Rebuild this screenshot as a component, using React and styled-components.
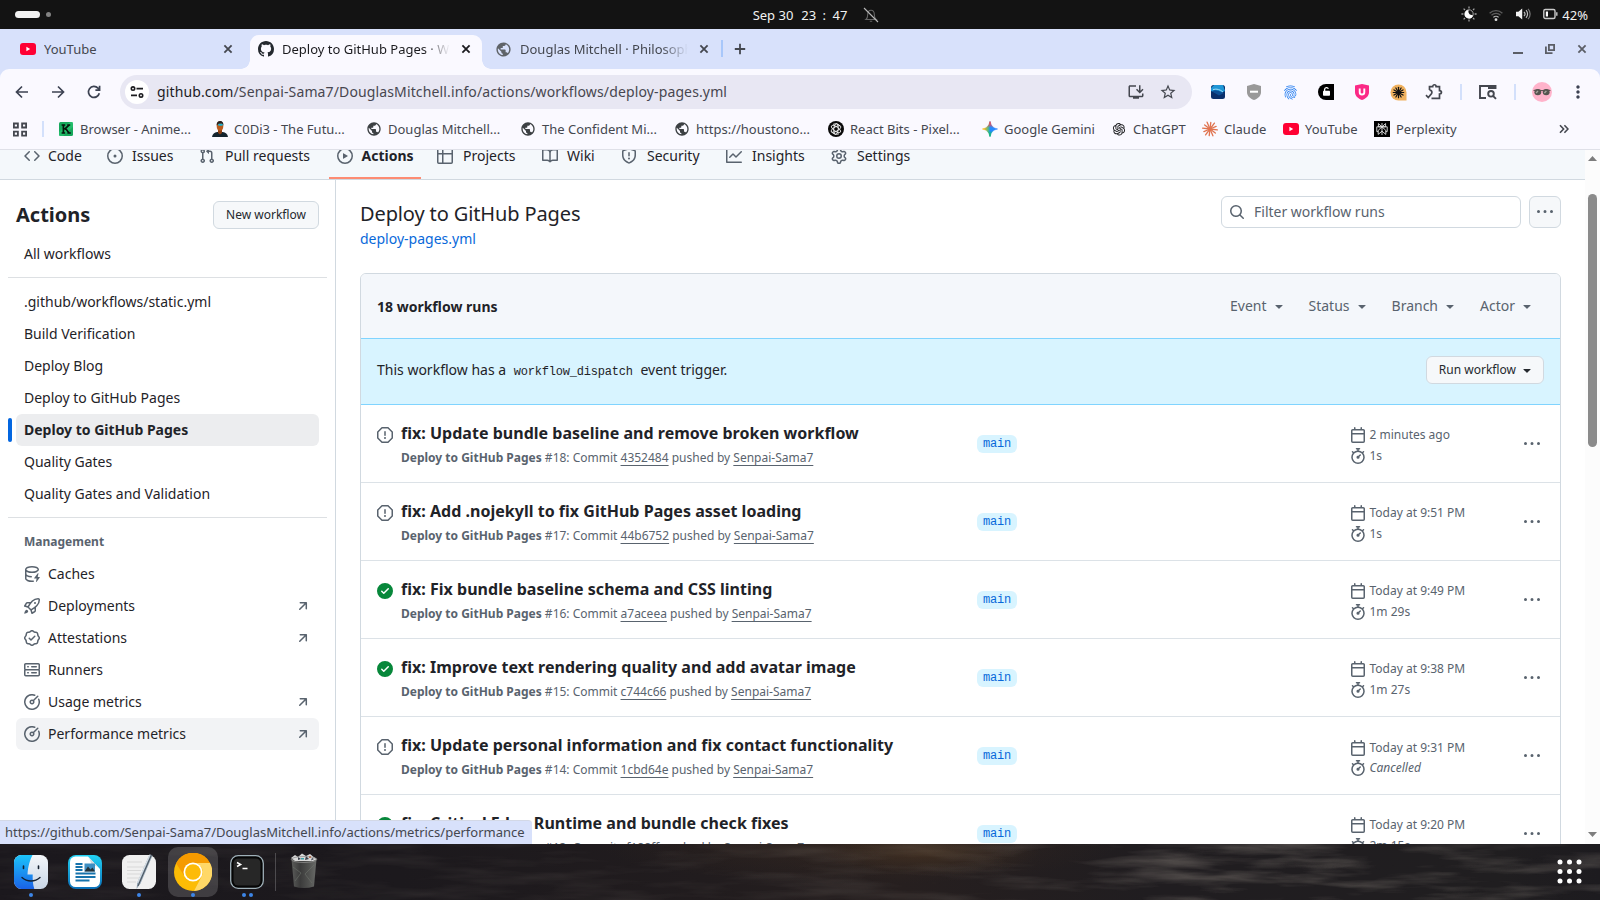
import React from "react";
import styled, { createGlobalStyle, css } from "styled-components";
import { MdPublic, MdFingerprint, MdStarBorder, MdInstallDesktop, MdMoreVert } from "react-icons/md";
import { AiOutlineOpenAI } from "react-icons/ai";

const GlobalStyle = createGlobalStyle`
  * { box-sizing: border-box; }
  body {
    margin: 0;
    overflow: hidden;
    font-family: "Noto Sans", sans-serif;
    font-size: 14px;
    color: #1f2328;
    background: #fff;
  }
  svg { display: block; flex: none; }
`;

/* ---------- icons ---------- */

const octicons = {
  code: "m11.28 3.22 4.25 4.25a.75.75 0 0 1 0 1.06l-4.25 4.25a.749.749 0 0 1-1.275-.326.749.749 0 0 1 .215-.734L13.94 8l-3.72-3.72a.749.749 0 0 1 .326-1.275.749.749 0 0 1 .734.215Zm-6.56 0a.751.751 0 0 1 1.042.018.751.751 0 0 1 .018 1.042L2.06 8l3.72 3.72a.749.749 0 0 1-.326 1.275.749.749 0 0 1-.734-.215L.47 8.53a.75.75 0 0 1 0-1.06Z",
  issue: "M8 9.5a1.5 1.5 0 1 0 0-3 1.5 1.5 0 0 0 0 3ZM8 0a8 8 0 1 1 0 16A8 8 0 0 1 8 0ZM1.5 8a6.5 6.5 0 1 0 13 0 6.5 6.5 0 0 0-13 0Z",
  pull: "M1.5 3.25a2.25 2.25 0 1 1 3 2.122v5.256a2.251 2.251 0 1 1-1.5 0V5.372A2.25 2.25 0 0 1 1.5 3.25Zm5.677-.177L9.573.677A.25.25 0 0 1 10 .854V2.5h1A2.5 2.5 0 0 1 13.5 5v5.628a2.251 2.251 0 1 1-1.5 0V5a1 1 0 0 0-1-1h-1v1.646a.25.25 0 0 1-.427.177L7.177 3.427a.25.25 0 0 1 0-.354ZM3.75 2.5a.75.75 0 1 0 0 1.5.75.75 0 0 0 0-1.5Zm0 9.5a.75.75 0 1 0 0 1.5.75.75 0 0 0 0-1.5Zm8.25.75a.75.75 0 1 0 1.5 0 .75.75 0 0 0-1.5 0Z",
  play: "M8 0a8 8 0 1 1 0 16A8 8 0 0 1 8 0ZM1.5 8a6.5 6.5 0 1 0 13 0 6.5 6.5 0 0 0-13 0Zm4.879-2.773 4.264 2.559a.25.25 0 0 1 0 .428l-4.264 2.559A.25.25 0 0 1 6 10.559V5.442a.25.25 0 0 1 .379-.215Z",
  table: "M0 1.75C0 .784.784 0 1.75 0h12.5C15.216 0 16 .784 16 1.75v12.5A1.75 1.75 0 0 1 14.25 16H1.75A1.75 1.75 0 0 1 0 14.25ZM6.5 6.5v8h7.75a.25.25 0 0 0 .25-.25V6.5Zm8-1.5V1.75a.25.25 0 0 0-.25-.25H6.5V5Zm-13 1.5v7.75c0 .138.112.25.25.25H5v-8ZM5 5V1.5H1.75a.25.25 0 0 0-.25.25V5Z",
  book: "M0 1.75A.75.75 0 0 1 .75 1h4.253c1.227 0 2.317.59 3 1.501A3.743 3.743 0 0 1 11.006 1h4.245a.75.75 0 0 1 .75.75v10.5a.75.75 0 0 1-.75.75h-4.507a2.25 2.25 0 0 0-1.591.659l-.622.621a.75.75 0 0 1-1.06 0l-.622-.621A2.25 2.25 0 0 0 5.258 13H.75a.75.75 0 0 1-.75-.75Zm7.251 10.324.004-5.073-.002-2.253A2.25 2.25 0 0 0 5.003 2.5H1.5v9h3.757a3.75 3.75 0 0 1 1.994.574ZM8.755 4.75l-.004 7.322a3.752 3.752 0 0 1 1.992-.572H14.5v-9h-3.495a2.25 2.25 0 0 0-2.25 2.25Z",
  shield: "M7.467.133a1.748 1.748 0 0 1 1.066 0l5.25 1.68A1.75 1.75 0 0 1 15 3.48V7c0 1.566-.32 3.182-1.303 4.682-.983 1.498-2.585 2.813-5.032 3.855a1.697 1.697 0 0 1-1.33 0c-2.447-1.042-4.049-2.357-5.032-3.855C1.32 10.182 1 8.566 1 7V3.48a1.755 1.755 0 0 1 1.217-1.667Zm.61 1.429a.25.25 0 0 0-.153 0l-5.25 1.68a.25.25 0 0 0-.174.238V7c0 1.358.275 2.666 1.057 3.86.784 1.194 2.121 2.34 4.366 3.297a.196.196 0 0 0 .154 0c2.245-.956 3.582-2.104 4.366-3.298C13.225 9.666 13.5 8.36 13.5 7V3.48a.251.251 0 0 0-.174-.237l-5.25-1.68ZM8.75 4.75v3a.75.75 0 0 1-1.5 0v-3a.75.75 0 0 1 1.5 0ZM9 10.5a1 1 0 1 1-2 0 1 1 0 0 1 2 0Z",
  graph: "M1.5 1.75V13.5h13.75a.75.75 0 0 1 0 1.5H.75a.75.75 0 0 1-.75-.75V1.75a.75.75 0 0 1 1.5 0Zm14.28 2.53-5.25 5.25a.75.75 0 0 1-1.06 0L7 7.06 4.28 9.78a.751.751 0 0 1-1.042-.018.751.751 0 0 1-.018-1.042l3.25-3.25a.75.75 0 0 1 1.06 0L10 7.94l4.72-4.72a.751.751 0 0 1 1.042.018.751.751 0 0 1 .018 1.042Z",
  gear: "M8 0a8.2 8.2 0 0 1 .701.031C9.444.095 9.99.645 10.16 1.29l.288 1.107c.018.066.079.158.212.224.231.114.454.243.668.386.123.082.233.09.299.071l1.103-.303c.644-.176 1.392.021 1.82.63.27.385.506.792.704 1.218.315.675.111 1.422-.364 1.891l-.814.806c-.049.048-.098.147-.088.294.016.257.016.515 0 .772-.01.147.038.246.088.294l.814.806c.475.469.679 1.216.364 1.891a7.977 7.977 0 0 1-.704 1.217c-.428.61-1.176.807-1.82.63l-1.102-.302c-.067-.019-.177-.011-.3.071a5.909 5.909 0 0 1-.668.386c-.133.066-.194.158-.211.224l-.29 1.106c-.168.646-.715 1.196-1.458 1.26a8.006 8.006 0 0 1-1.402 0c-.743-.064-1.289-.614-1.458-1.26l-.289-1.106c-.018-.066-.079-.158-.212-.224a5.738 5.738 0 0 1-.668-.386c-.123-.082-.233-.09-.299-.071l-1.103.303c-.644.176-1.392-.021-1.82-.63a8.12 8.12 0 0 1-.704-1.218c-.315-.675-.111-1.422.363-1.891l.815-.806c.05-.048.098-.147.088-.294a6.214 6.214 0 0 1 0-.772c.01-.147-.038-.246-.088-.294l-.815-.806C.635 6.045.431 5.298.746 4.623a7.92 7.92 0 0 1 .704-1.217c.428-.61 1.176-.807 1.82-.63l1.102.302c.067.019.177.011.3-.071.214-.143.437-.272.668-.386.133-.066.194-.158.211-.224l.29-1.106C6.009.645 6.556.095 7.299.03 7.53.01 7.764 0 8 0Zm-.571 1.525c-.036.003-.108.036-.137.146l-.289 1.105c-.147.561-.549.967-.998 1.189-.173.086-.34.183-.5.29-.417.278-.97.423-1.529.27l-1.103-.303c-.109-.03-.175.016-.195.045-.22.312-.412.644-.573.99-.014.031-.021.11.059.19l.815.806c.411.406.562.957.53 1.456a4.709 4.709 0 0 0 0 .582c.032.499-.119 1.05-.53 1.456l-.815.806c-.081.08-.073.159-.059.19.162.346.353.677.573.989.02.03.085.076.195.046l1.102-.303c.56-.153 1.113-.008 1.53.27.161.107.328.204.501.29.447.222.85.629.997 1.189l.289 1.105c.029.109.101.143.137.146a6.6 6.6 0 0 0 1.142 0c.036-.003.108-.036.137-.146l.289-1.105c.147-.561.549-.967.998-1.189.173-.086.34-.183.5-.29.417-.278.97-.423 1.529-.27l1.103.303c.109.029.175-.016.195-.045.22-.313.411-.644.573-.99.014-.031.021-.11-.059-.19l-.815-.806c-.411-.406-.562-.957-.53-1.456a4.709 4.709 0 0 0 0-.582c-.032-.499.119-1.05.53-1.456l.815-.806c.081-.08.073-.159.059-.19a6.464 6.464 0 0 0-.573-.989c-.02-.03-.085-.076-.195-.046l-1.102.303c-.56.153-1.113.008-1.53-.27a4.44 4.44 0 0 0-.501-.29c-.447-.222-.85-.629-.997-1.189l-.289-1.105c-.029-.11-.101-.143-.137-.146a6.6 6.6 0 0 0-1.142 0ZM11 8a3 3 0 1 1-6 0 3 3 0 0 1 6 0ZM9.5 8a1.5 1.5 0 1 0-3.001.001A1.5 1.5 0 0 0 9.5 8Z",
  cache: "M2.5 5.724V8c0 .248.238.7 1.169 1.159.874.43 2.144.745 3.62.822a.75.75 0 1 1-.078 1.498c-1.622-.085-3.102-.432-4.204-.975a5.565 5.565 0 0 1-.507-.28V12.5c0 .133.058.318.282.551.227.237.591.483 1.101.707 1.015.447 2.47.742 4.117.742.406 0 .802-.018 1.183-.052a.751.751 0 1 1 .134 1.494C8.89 15.98 8.45 16 8 16c-1.805 0-3.475-.32-4.721-.869-.623-.274-1.173-.619-1.579-1.041-.408-.425-.7-.964-.7-1.59v-9c0-.626.292-1.165.7-1.591.406-.42.956-.766 1.579-1.04C4.525.32 6.195 0 8 0c1.806 0 3.476.32 4.721.869.623.274 1.173.619 1.579 1.041.408.425.7.964.7 1.59 0 .626-.292 1.165-.7 1.591-.406.42-.956.766-1.578 1.04C11.475 6.68 9.805 7 8 7c-1.805 0-3.475-.32-4.721-.869a6.15 6.15 0 0 1-.779-.407Zm0-2.224c0 .133.058.318.282.551.227.237.591.483 1.101.707C4.898 5.205 6.353 5.5 8 5.5c1.646 0 3.101-.295 4.118-.742.508-.224.873-.471 1.1-.708.224-.232.282-.417.282-.55 0-.133-.058-.318-.282-.551-.227-.237-.591-.483-1.101-.707C11.102 1.795 9.647 1.5 8 1.5c-1.646 0-3.101.295-4.118.742-.508.224-.873.471-1.1.708-.224.232-.282.417-.282.55ZM14.49 7.582a.375.375 0 0 0-.66-.313l-3.625 4.625a.375.375 0 0 0 .295.606h2.127l-.619 2.922a.375.375 0 0 0 .666.304l3.125-4.125A.375.375 0 0 0 15.5 11h-1.778l.769-3.418Z",
  rocket: "M14.064 0h.186C15.216 0 16 .784 16 1.75v.186a8.752 8.752 0 0 1-2.564 6.186l-.458.459c-.314.314-.641.616-.979.904v3.207c0 .608-.315 1.172-.833 1.49l-2.774 1.707a.749.749 0 0 1-1.11-.418l-.954-3.102a1.214 1.214 0 0 1-.145-.125L3.754 9.816a1.218 1.218 0 0 1-.124-.145L.528 8.717a.749.749 0 0 1-.418-1.11l1.71-2.774A1.748 1.748 0 0 1 3.31 4h3.204c.288-.338.59-.665.904-.979l.459-.458A8.749 8.749 0 0 1 14.064 0ZM8.938 3.623h-.002l-.458.458c-.76.76-1.437 1.598-2.02 2.5l-1.5 2.317 2.143 2.143 2.317-1.5c.902-.583 1.74-1.26 2.499-2.02l.459-.458a7.25 7.25 0 0 0 2.123-5.127V1.75a.25.25 0 0 0-.25-.25h-.186a7.249 7.249 0 0 0-5.125 2.123ZM3.56 14.56c-.732.732-2.334 1.045-3.005 1.148a.234.234 0 0 1-.201-.064.234.234 0 0 1-.064-.201c.103-.671.416-2.273 1.15-3.003a1.502 1.502 0 1 1 2.12 2.12Zm6.94-3.935c-.088.06-.177.118-.266.175l-2.35 1.521.548 1.783 1.949-1.2a.25.25 0 0 0 .119-.213ZM3.678 8.116 5.2 5.766c.058-.09.117-.178.176-.266H3.309a.25.25 0 0 0-.213.119l-1.2 1.95ZM12 5a1 1 0 1 1-2 0 1 1 0 0 1 2 0Z",
  verified: "m9.585.52.929.68c.153.112.331.186.518.215l1.138.175a2.678 2.678 0 0 1 2.24 2.24l.174 1.139c.029.187.103.365.215.518l.68.928a2.677 2.677 0 0 1 0 3.17l-.68.928a1.174 1.174 0 0 0-.215.518l-.175 1.138a2.678 2.678 0 0 1-2.241 2.241l-1.138.175a1.17 1.17 0 0 0-.518.215l-.928.68a2.677 2.677 0 0 1-3.17 0l-.928-.68a1.174 1.174 0 0 0-.518-.215L3.83 14.41a2.678 2.678 0 0 1-2.24-2.24l-.175-1.138a1.17 1.17 0 0 0-.215-.518l-.68-.928a2.677 2.677 0 0 1 0-3.17l.68-.928c.112-.153.186-.331.215-.518l.175-1.14a2.678 2.678 0 0 1 2.24-2.24l1.139-.175c.187-.029.365-.103.518-.215l.928-.68a2.677 2.677 0 0 1 3.17 0ZM7.303 1.728l-.927.68a2.67 2.67 0 0 1-1.18.489l-1.137.174a1.179 1.179 0 0 0-.987.987l-.174 1.136a2.677 2.677 0 0 1-.489 1.18l-.68.928a1.18 1.18 0 0 0 0 1.394l.68.927c.256.348.424.753.489 1.18l.174 1.137c.078.509.478.909.987.987l1.136.174a2.67 2.67 0 0 1 1.18.489l.928.68c.414.305.979.305 1.394 0l.927-.68a2.67 2.67 0 0 1 1.18-.489l1.137-.174a1.18 1.18 0 0 0 .987-.987l.174-1.136a2.67 2.67 0 0 1 .489-1.18l.68-.928a1.176 1.176 0 0 0 0-1.394l-.68-.927a2.686 2.686 0 0 1-.489-1.18l-.174-1.137a1.179 1.179 0 0 0-.987-.987l-1.136-.174a2.677 2.677 0 0 1-1.18-.489l-.928-.68a1.176 1.176 0 0 0-1.394 0ZM11.28 6.78l-3.75 3.75a.75.75 0 0 1-1.06 0L4.72 8.78a.751.751 0 0 1 .018-1.042.751.751 0 0 1 1.042-.018L7 8.94l3.22-3.22a.751.751 0 0 1 1.042.018.751.751 0 0 1 .018 1.042Z",
  server: "M1.75 1h12.5c.966 0 1.75.784 1.75 1.75v4c0 .372-.116.717-.314 1 .198.283.314.628.314 1v4a1.75 1.75 0 0 1-1.75 1.75H1.75A1.75 1.75 0 0 1 0 12.75v-4c0-.358.109-.707.314-1a1.739 1.739 0 0 1-.314-1v-4C0 1.784.784 1 1.75 1ZM1.5 2.75v4c0 .138.112.25.25.25h12.5a.25.25 0 0 0 .25-.25v-4a.25.25 0 0 0-.25-.25H1.75a.25.25 0 0 0-.25.25Zm.25 5.75a.25.25 0 0 0-.25.25v4c0 .138.112.25.25.25h12.5a.25.25 0 0 0 .25-.25v-4a.25.25 0 0 0-.25-.25ZM7 4.75A.75.75 0 0 1 7.75 4h4.5a.75.75 0 0 1 0 1.5h-4.5A.75.75 0 0 1 7 4.75ZM7.75 10h4.5a.75.75 0 0 1 0 1.5h-4.5a.75.75 0 0 1 0-1.5ZM3 4.75A.75.75 0 0 1 3.75 4h.5a.75.75 0 0 1 0 1.5h-.5A.75.75 0 0 1 3 4.75ZM3.75 10h.5a.75.75 0 0 1 0 1.5h-.5a.75.75 0 0 1 0-1.5Z",
  meter: "M8 1.5a6.5 6.5 0 1 0 6.016 4.035.75.75 0 0 1 1.388-.57 8 8 0 1 1-4.37-4.37.75.75 0 0 1-.569 1.389A6.473 6.473 0 0 0 8 1.5Zm6.28.22a.75.75 0 0 1 0 1.06l-4.063 4.064a2.5 2.5 0 1 1-1.06-1.06L13.22 1.72a.75.75 0 0 1 1.06 0ZM7 8a1 1 0 1 0 2 0 1 1 0 0 0-2 0Z",
  arrow: "M4.53 4.75A.75.75 0 0 1 5.28 4h6.01a.75.75 0 0 1 .75.75v6.01a.75.75 0 0 1-1.5 0v-4.2l-5.26 5.261a.749.749 0 0 1-1.275-.326.749.749 0 0 1 .215-.734L9.48 5.5h-4.2a.75.75 0 0 1-.75-.75Z",
  calendar: "M4.75 0a.75.75 0 0 1 .75.75V2h5V.75a.75.75 0 0 1 1.5 0V2h1.25c.966 0 1.75.784 1.75 1.75v10.5A1.75 1.75 0 0 1 13.25 16H2.75A1.75 1.75 0 0 1 1 14.25V3.75C1 2.784 1.784 2 2.75 2H4V.75A.75.75 0 0 1 4.75 0ZM2.5 7.5v6.75c0 .138.112.25.25.25h10.5a.25.25 0 0 0 .25-.25V7.5Zm10.75-4H2.75a.25.25 0 0 0-.25.25V6h11V3.75a.25.25 0 0 0-.25-.25Z",
  stopwatch: "M5.75.75A.75.75 0 0 1 6.5 0h3a.75.75 0 0 1 0 1.5h-.75v1l-.001.041a6.724 6.724 0 0 1 3.464 1.435l.007-.006.75-.75a.749.749 0 0 1 1.275.326.749.749 0 0 1-.215.734l-.75.75-.006.007a6.75 6.75 0 1 1-10.548 0L2.72 5.03l-.75-.75a.751.751 0 0 1 .018-1.042.751.751 0 0 1 1.042-.018l.75.75.007.006A6.72 6.72 0 0 1 7.25 2.541V1.5H6.5a.75.75 0 0 1-.75-.75ZM8 14.5a5.25 5.25 0 1 0-.001-10.501A5.25 5.25 0 0 0 8 14.5Zm.389-6.7 1.33-1.33a.75.75 0 1 1 1.061 1.06L9.45 8.861A1.503 1.503 0 0 1 8 10.75a1.499 1.499 0 1 1 .389-2.95Z",
  kebab: "M8 9a1.5 1.5 0 1 0 0-3 1.5 1.5 0 0 0 0 3ZM1.5 9a1.5 1.5 0 1 0 0-3 1.5 1.5 0 0 0 0 3Zm13 0a1.5 1.5 0 1 0 0-3 1.5 1.5 0 0 0 0 3Z",
  search: "M10.68 11.74a6 6 0 0 1-7.922-8.982 6 6 0 0 1 8.982 7.922l3.04 3.04a.749.749 0 0 1-.326 1.275.749.749 0 0 1-.734-.215ZM11.5 7a4.499 4.499 0 1 0-8.997 0A4.499 4.499 0 0 0 11.5 7Z",
  stop: "M4.47.22A.749.749 0 0 1 5 0h6c.199 0 .389.079.53.22l4.25 4.25c.141.14.22.331.22.53v6a.749.749 0 0 1-.22.53l-4.25 4.25A.749.749 0 0 1 11 16H5a.749.749 0 0 1-.53-.22L.22 11.53A.749.749 0 0 1 0 11V5c0-.199.079-.389.22-.53Zm.84 1.28L1.5 5.31v5.38l3.81 3.81h5.38l3.81-3.81V5.31L10.69 1.5ZM8 4a.75.75 0 0 1 .75.75v3.5a.75.75 0 0 1-1.5 0v-3.5A.75.75 0 0 1 8 4Zm0 8a1 1 0 1 1 0-2 1 1 0 0 1 0 2Z",
  check: "M8 16A8 8 0 1 1 8 0a8 8 0 0 1 0 16Zm3.78-9.72a.751.751 0 0 0-.018-1.042.751.751 0 0 0-1.042-.018L6.75 9.19 5.28 7.72a.751.751 0 0 0-1.042.018.751.751 0 0 0-.018 1.042l2 2a.75.75 0 0 0 1.06 0Z",
  github: "M8 0c4.42 0 8 3.58 8 8a8.013 8.013 0 0 1-5.45 7.59c-.4.08-.55-.17-.55-.38 0-.27.01-1.13.01-2.2 0-.75-.25-1.23-.54-1.48 1.78-.2 3.65-.88 3.65-3.95 0-.88-.31-1.59-.82-2.15.08-.2.36-1.02-.08-2.12 0 0-.67-.22-2.2.82-.64-.18-1.32-.27-2-.27-.68 0-1.36.09-2 .27-1.53-1.03-2.2-.82-2.2-.82-.44 1.1-.16 1.92-.08 2.12-.51.56-.82 1.28-.82 2.15 0 3.06 1.86 3.75 3.64 3.95-.23.2-.44.55-.51 1.07-.46.21-1.61.55-2.33-.66-.15-.24-.6-.83-1.23-.82-.67.01-.27.38.01.53.34.19.73.9.82 1.13.16.45.68 1.31 2.69.94 0 .67.01 1.3.01 1.49 0 .21-.15.45-.55.38A7.995 7.995 0 0 1 0 8c0-4.42 3.58-8 8-8Z",
  caret: "m4.427 7.427 3.396 3.396a.25.25 0 0 0 .354 0l3.396-3.396A.25.25 0 0 0 11.396 7H4.604a.25.25 0 0 0-.177.427Z",
};

const Octicon = ({ name, size = 16, color = "#59636e" }) => (
  <svg width={size} height={size} viewBox="0 0 16 16" fill={color}>
    <path fillRule={name === "cache" ? "nonzero" : "evenodd"} d={octicons[name]} />
  </svg>
);

const Line = ({ w = 16, h = 16, color = "#44474f", sw = 1.8, box, children }) => (
  <svg width={w} height={h} viewBox={box || `0 0 ${w} ${h}`} fill="none" stroke={color} strokeWidth={sw}>
    {children}
  </svg>
);

const YouTubeIcon = () => (
  <svg width="16" height="16" viewBox="0 0 16 16">
    <rect x="0" y="2" width="16" height="12" rx="3" fill="#ff0033" />
    <path d="M6.4 5.8v4.4L10.2 8z" fill="#fff" />
  </svg>
);

const CloseIcon = ({ color = "#44474f" }) => (
  <Line w={10} h={10} color={color} sw={1.8}>
    <path d="M1.4 1.4l7.2 7.2M8.6 1.4L1.4 8.6" />
  </Line>
);

const Burst = ({ size = 16, color, count = 12, sw = 1.3, r = 7.4 }) => (
  <svg width={size} height={size} viewBox="-8 -8 16 16" stroke={color} strokeWidth={sw} strokeLinecap="round">
    {Array.from({ length: count }, (_, i) => {
      const a = (i * 2 * Math.PI) / count + 0.12;
      const len = i % 2 ? r * 0.9 : r;
      return <line key={i} x1="0" y1="0" x2={Math.cos(a) * len} y2={Math.sin(a) * len} />;
    })}
  </svg>
);

const KIcon = () => (
  <svg width="16" height="16" viewBox="0 0 16 16">
    <rect x="1" y="1" width="14" height="14" rx="1.5" fill="#17a85c" />
    <path d="M1 11L12 1h3v5L5 15H1z" fill="#2fd07a" opacity=".5" />
    <path d="M3.6 4h3.6M3.6 12h3.6M9.2 4h3M9.4 12h3.4M5.4 4v8M11 4.2L6.4 8.4M7.6 7.4L11 12" stroke="#06140c" strokeWidth="1.7" fill="none" />
  </svg>
);

const PortraitIcon = () => (
  <svg width="16" height="16" viewBox="0 0 16 16">
    <path d="M0 16c.3-3 2.6-4.4 5.2-5h5.6c2.6.6 4.9 2 5.2 5z" fill="#13232e" />
    <path d="M6 8h4v4l-2 1.4L6 12z" fill="#8c3f12" />
    <ellipse cx="8" cy="5" rx="3.3" ry="4.8" fill="#b9591b" />
    <path d="M4.6 4.5C4.5 1.4 6 0 8.2 0s3.4 1.6 3.2 4.4L9.6 2.6 6.4 2.8z" fill="#23201f" />
    <rect x="6.2" y="2.8" width="4.6" height="2" rx=".8" fill="#18b5d8" />
  </svg>
);

const KnotIcon = () => (
  <svg width="16" height="16" viewBox="-8 -8 16 16" fill="none" stroke="#fff" strokeWidth=".85">
    <circle r="8" fill="#0a0a0a" stroke="none" />
    <ellipse rx="5.4" ry="2.2" transform="rotate(35)" />
    <ellipse rx="5.4" ry="2.2" transform="rotate(95)" />
    <ellipse rx="5.4" ry="2.2" transform="rotate(150)" />
    <path d="M-3-4.6C0-6 3-5 4-3M3 4.8C0 6-3.4 5-4.6 2.6" />
  </svg>
);

const GEMINI_STAR = "M8 .5C8.8 4.9 11.1 7.2 15.5 8 11.1 8.8 8.8 11.1 8 15.5 7.2 11.1 4.9 8.8.5 8 4.9 7.2 7.2 4.9 8 .5z";

const GeminiIcon = () => (
  <svg width="16" height="16" viewBox="0 0 16 16">
    <defs>
      <linearGradient id="gem" x1="0" y1=".5" x2="1" y2=".5">
        <stop offset=".1" stopColor="#fabc12" />
        <stop offset=".42" stopColor="#3fb6a0" />
        <stop offset=".5" stopColor="#1f8bff" />
        <stop offset="1" stopColor="#2f86ff" />
      </linearGradient>
      <linearGradient id="gemv" x1=".5" y1="0" x2=".5" y2="1">
        <stop offset=".1" stopColor="#ff4641" />
        <stop offset=".42" stopColor="#ff4641" stopOpacity="0" />
        <stop offset=".62" stopColor="#0ebc5f" stopOpacity="0" />
        <stop offset=".9" stopColor="#0ebc5f" />
      </linearGradient>
    </defs>
    <path d={GEMINI_STAR} fill="url(#gem)" stroke="url(#gem)" strokeWidth=".7" />
    <path d={GEMINI_STAR} fill="url(#gemv)" stroke="url(#gemv)" strokeWidth=".7" />
  </svg>
);

const PerplexityIcon = () => (
  <svg width="16" height="16" viewBox="0 0 16 16" fill="none" stroke="#e6e6e6" strokeWidth=".9">
    <rect width="16" height="16" fill="#000" stroke="none" />
    <path d="M8 2v12M4.4 2.6v3.2h7.2V2.6L8 5.8zM8 5.8L4.2 9.4v4L8 10.2l3.8 3.2v-4zM4.2 10.6H2.8V5.8h10.4v4.8h-1.4" />
  </svg>
);

/* ---------- system top bar ---------- */

const Desktop = styled.div`
  width: 1600px;
  height: 900px;
  display: flex;
  flex-direction: column;
  overflow: hidden;
`;

const TopBar = styled.header`
  height: 29px;
  background: #131313;
  color: #f2f2f2;
  font-size: 13px;
  display: grid;
  grid-template-columns: 1fr auto 1fr;
  align-items: center;
`;

const Workspaces = styled.div`
  display: flex;
  align-items: center;
  gap: 6px;
  padding-left: 15px;
`;

const WorkspacePill = styled.span`
  width: ${(p) => (p.$active ? 25 : 5)}px;
  height: ${(p) => (p.$active ? 7 : 5)}px;
  border-radius: 4px;
  background: ${(p) => (p.$active ? "#f2f2f2" : "#828282")};
`;

const Clock = styled.div`
  display: flex;
  align-items: center;
  gap: 8px;
  padding-left: 32px;
  white-space: pre;
  svg { margin-left: 8px; }
`;

const Time = styled.span`
  word-spacing: 3px;
`;

const Tray = styled.div`
  display: flex;
  align-items: center;
  justify-content: flex-end;
  gap: 12px;
  padding-right: 12px;
`;

const TrayIcon = styled.span`
  padding-bottom: 1px;
`;

const Battery = styled.span`
  display: flex;
  align-items: center;
  gap: 4px;
`;

const SystemBar = () => (
  <TopBar>
    <Workspaces>
      <WorkspacePill $active />
      <WorkspacePill />
    </Workspaces>
    <Clock>
      <span>Sep 30</span>
      <Time>23 : 47</Time>
      <Line color="#8c8c8c" sw={1.1}>
        <path d="M3 12.5c1.4-1 1.7-2.6 1.7-5C4.7 5 6 3.2 8 3.2s3.3 1.8 3.3 4.3c0 2.4.3 4 1.7 5zM6.8 14.3h2.4" stroke="#666" />
        <path d="M1 1l14 14" stroke="#b8b8b8" />
      </Line>
    </Clock>
    <Tray>
      <TrayIcon>
        <Line color="#a0a0a0" sw={1.3}>
          <path d="M8 .4v2M8 13.6v2M.4 8h2M13.6 8h2M2.6 2.6L4 4M12 12l1.4 1.4M2.6 13.4L4 12M12 4l1.4-1.4" />
          <circle cx="8" cy="8" r="4.2" stroke="#a8a8a8" strokeWidth="1" />
          <path d="M7.6 4a4.200 4.200 0 1 0 4.400 5.200C9 9.400 6.800 7.400 7.600 4z" fill="#fff" stroke="none" />
        </Line>
      </TrayIcon>
      <Line w={14} h={14} sw={1.3} color="#5d5d5d">
        <path d="M.6 5.2a9 9 0 0 1 12.8 0M2.5 7.3a6.3 6.3 0 0 1 9 0" />
        <path d="M4.4 9.4a3.7 3.7 0 0 1 5.2 0" stroke="#b0b0b0" />
        <circle cx="7" cy="11.7" r="1.4" fill="#ddd" stroke="none" />
      </Line>
      <TrayIcon>
        <Line sw={1.2} color="#bdbdbd">
          <path d="M1 5.8h2.4L7.2 2.6v10.8L3.4 10.2H1z" fill="#f2f2f2" stroke="none" />
          <path d="M9 5.8a3.2 3.2 0 0 1 0 4.4M11 4.2a5.4 5.4 0 0 1 0 7.6" />
          <path d="M13 2.8a7.4 7.4 0 0 1 0 10.4" stroke="#777" />
        </Line>
      </TrayIcon>
      <Battery>
        <TrayIcon>
          <Line w={15} box="0 0 15 16" sw={1.4} color="#c9c9c9">
            <rect x=".8" y="3.5" width="11.2" height="9" rx="1.5" />
            <path d="M13.8 6.2v3.6" />
            <rect x="2.8" y="5.5" width="2.2" height="5" fill="#fff" stroke="none" />
          </Line>
        </TrayIcon>
        <span>42%</span>
      </Battery>
    </Tray>
  </TopBar>
);

/* ---------- browser tab strip ---------- */

const TabStrip = styled.div`
  height: 40px;
  background: #d8e1fb;
  display: flex;
  align-items: flex-end;
  font-size: 13px;
  color: #44474f;
`;

const Tab = styled.div`
  position: relative;
  width: ${(p) => p.$width}px;
  height: 34px;
  padding: 0 11px 6px ${(p) => p.$pad}px;
  display: flex;
  align-items: center;
  gap: 8px;
  ${(p) =>
    p.$active &&
    css`
      background: #faf9ff;
      border-radius: 9px 9px 0 0;
      color: #1b1b1f;
      &::before,
      &::after {
        content: "";
        position: absolute;
        bottom: 0;
        width: 9px;
        height: 9px;
      }
      &::before {
        left: -9px;
        background: radial-gradient(circle at 0 0, transparent 8.5px, #faf9ff 9px);
      }
      &::after {
        right: -9px;
        background: radial-gradient(circle at 100% 0, transparent 8.5px, #faf9ff 9px);
      }
    `}
`;

const TabTitle = styled.span`
  flex: 0 0 168px;
  overflow: hidden;
  white-space: nowrap;
  mask-image: ${(p) => (p.$fade ? "linear-gradient(90deg, #000 84%, transparent 100%)" : "none")};
`;

const TabClose = styled.span`
  margin-left: auto;
`;

const TabGap = styled.span`
  width: 6px;
`;

const TabDivider = styled.span`
  width: 2px;
  height: 17px;
  margin: 0 11px 12px 1px;
  background: #a8c7fa;
`;

const NewTab = styled.span`
  margin-bottom: 14px;
`;

const WindowControls = styled.div`
  margin-left: auto;
  height: 40px;
  display: flex;
  align-items: center;
  gap: 22px;
  padding-right: 13px;
`;

const Tabs = () => (
  <TabStrip>
    <Tab $width={244} $pad={20}>
      <YouTubeIcon />
      <TabTitle>YouTube</TabTitle>
      <TabClose><CloseIcon /></TabClose>
    </Tab>
    <TabGap />
    <Tab $active $width={232} $pad={8}>
      <Octicon name="github" color="#24292f" />
      <TabTitle $fade>Deploy to GitHub Pages · Workflow runs</TabTitle>
      <TabClose><CloseIcon color="#1b1b1f" /></TabClose>
    </Tab>
    <Tab $width={238} $pad={13}>
      <MdPublic size={17} color="#5f6368" />
      <TabTitle $fade>Douglas Mitchell · Philosopher</TabTitle>
      <TabClose><CloseIcon /></TabClose>
    </Tab>
    <TabDivider />
    <NewTab>
      <Line w={12} h={12}><path d="M6 .8v10.4M.8 6h10.4" /></Line>
    </NewTab>
    <WindowControls>
      <Line w={10} h={10} color="#5b5e66" sw={2}><path d="M0 9h10" /></Line>
      <Line w={10} h={10} color="#5b5e66" sw={1.8}>
        <path d="M3.9.9h5.2v5.2H3.9zM.9 2.5v6.6h6.6" />
      </Line>
      <CloseIcon color="#5b5e66" />
    </WindowControls>
  </TabStrip>
);

/* ---------- browser toolbar ---------- */

const ToolbarBack = styled.div`
  background: #d8e1fb;
`;

const BrowserBars = styled.div`
  height: 81px;
  background: #faf9ff;
  border-bottom: 1px solid #dfe0e8;
  border-radius: 9px 9px 0 0;
  padding-top: 6px;
`;

const Toolbar = styled.div`
  height: 34px;
  display: flex;
  align-items: center;
  padding-left: 4px;
`;

const Slot = styled.span`
  width: ${(p) => p.$width || 36}px;
  display: flex;
  justify-content: center;
  flex: none;
`;

const Separator = styled.span`
  width: 2px;
  height: 16px;
  background: #d3e0fb;
`;

const Omnibox = styled.div`
  width: 1072px;
  height: 34px;
  margin: 0 8px;
  border-radius: 17px;
  background: #e8e7f3;
  display: flex;
  align-items: center;
  padding: 0 15px 0 5px;
`;

const SiteInfo = styled.span`
  width: 24px;
  height: 24px;
  border-radius: 12px;
  background: #fff;
  display: flex;
  align-items: center;
  justify-content: center;
  margin-right: 8px;
`;

const Url = styled.span`
  padding-bottom: 2px;
  font-size: 14px;
  letter-spacing: 0.13px;
  color: #47464f;
`;

const UrlHost = styled.span`
  color: #1b1b1f;
`;

const OmniActions = styled.span`
  margin-left: auto;
  display: flex;
  gap: 14px;
`;

const BookmarksBar = styled.nav`
  height: 40px;
  display: flex;
  align-items: center;
  padding-left: 12px;
  font-size: 13px;
  color: #44474f;
`;

const BookmarkDivider = styled(Separator)`
  margin: 0 14px 0 15px;
`;

const Bookmark = styled.span`
  width: ${(p) => p.$width}px;
  display: flex;
  align-items: center;
  gap: 6px;
  white-space: nowrap;
`;

const Overflow = styled.span`
  margin-left: auto;
  padding-right: 31px;
`;

const bookmarks = [
  { icon: <KIcon />, label: "Browser - Anime...", width: 154 },
  { icon: <PortraitIcon />, label: "C0Di3 - The Futu...", width: 154 },
  { icon: <MdPublic size={16} color="#3c4043" />, label: "Douglas Mitchell...", width: 154 },
  { icon: <MdPublic size={16} color="#3c4043" />, label: "The Confident Mi...", width: 154 },
  { icon: <MdPublic size={16} color="#3c4043" />, label: "https://houstono...", width: 154 },
  { icon: <KnotIcon />, label: "React Bits - Pixel...", width: 154 },
  { icon: <GeminiIcon />, label: "Google Gemini", width: 129 },
  { icon: <AiOutlineOpenAI size={16} color="#202124" />, label: "ChatGPT", width: 91 },
  { icon: <Burst color="#e0734f" />, label: "Claude", width: 81 },
  { icon: <YouTubeIcon />, label: "YouTube", width: 91 },
  { icon: <PerplexityIcon />, label: "Perplexity", width: 90 },
];

const Extensions = () => (
  <>
    <Slot>
      <svg width="14" height="14" viewBox="0 0 14 14">
        <rect width="14" height="14" rx="2.5" fill="#0a2f6b" />
        <path d="M0 3l3-3h9l2 6-6 3-8-3z" fill="#1f96d6" />
        <path d="M1 6.5c3-2.5 6-1 12 1.5l-5 2.5z" fill="#0c4f96" />
        <path d="M2 4.5c4-1 7 0 10 2.5" stroke="#9adcf8" fill="none" />
      </svg>
    </Slot>
    <Slot>
      <svg width="16" height="16" viewBox="0 0 16 16">
        <path d="M8 0l7 2v6c0 4-3 6.5-7 8-4-1.5-7-4-7-8V2z" fill="#999" />
        <rect x="4" y="6.7" width="8" height="2" fill="#fff" />
      </svg>
    </Slot>
    <Slot><MdFingerprint size={17} color="#1a78f0" /></Slot>
    <Slot>
      <svg width="16" height="16" viewBox="0 0 16 16">
        <path d="M8 0h8v16H8A8 8 0 0 1 8 0z" fill="#000" />
        <rect x="5" y="6.8" width="7" height="5" rx=".8" fill="#fff" />
        <path d="M6.6 7V5.4a2 2 0 0 1 3.8-.6" stroke="#fff" strokeWidth="1.3" fill="none" />
      </svg>
    </Slot>
    <Slot>
      <svg width="16" height="16" viewBox="0 0 16 16">
        <path d="M8 0l7 1.6V8c0 4-3 6.5-7 8-4-1.5-7-4-7-8V1.6z" fill="#fb2a86" />
        <path d="M5.7 4.5v3.7a2.3 2.3 0 0 0 4.6 0V4.5" stroke="#fff" strokeWidth="1.9" fill="none" />
      </svg>
    </Slot>
    <Slot>
      <svg width="17" height="17" viewBox="-8.5 -8.5 17 17">
        <path d="M0-8A8 8 0 1 0 0 8H8V0A8 8 0 0 0 0-8z" fill="#f0b25f" />
        <g stroke="#111" strokeWidth="1.2" strokeLinecap="round">
          {[0, 30, 60, 90, 120, 150].map((a) => (
            <line key={a} x1="-5.2" x2="5.2" y1="0" y2="0" transform={`rotate(${a})`} />
          ))}
        </g>
      </svg>
    </Slot>
    <Slot>
      <Line w={18} h={18} sw={1.7}>
        <path d="M4.5 7V3.7h3.2c0-2.6 3.4-2.6 3.4 0h3.4v4c2.6 0 2.6 3.3 0 3.3v4.3H6.5M1 12.2l2.3 2.3L6.6 10.500c1-2-.4-3.300-2.100-3.300" />
      </Line>
    </Slot>
  </>
);

const BrowserToolbar = () => (
  <ToolbarBack>
    <BrowserBars>
      <Toolbar>
        <Slot><Line color="#3c4252" sw={1.7}><path d="M14 8H2.6M8 2.5L2.5 8 8 13.5" /></Line></Slot>
        <Slot><Line color="#3c4252" sw={1.7}><path d="M2 8h11.4M8 2.5L13.5 8 8 13.5" /></Line></Slot>
        <Slot><Line color="#3c4252" sw={1.7}><path d="M13.3 9.2A5.5 5.5 0 1 1 12 4.2L13.6 5.8M13.6 1.8v4.3H9.4" /></Line></Slot>
        <Omnibox>
          <SiteInfo>
            <Line w={14} h={14} color="#1b1b1f" sw={1.6}>
              <circle cx="3" cy="3.6" r="1.7" /><path d="M6.5 3.6H13M1 10.4h6" /><circle cx="11" cy="10.4" r="1.7" />
            </Line>
          </SiteInfo>
          <Url><UrlHost>github.com</UrlHost>/Senpai-Sama7/DouglasMitchell.info/actions/workflows/deploy-pages.yml</Url>
          <OmniActions>
            <MdInstallDesktop size={18} color="#44474f" />
            <MdStarBorder size={18} color="#44474f" />
          </OmniActions>
        </Omnibox>
        <Extensions />
        <Slot $width={18}><Separator /></Slot>
        <Slot>
          <Line w={18} h={18} sw={1.9}>
            <path d="M7 15H1V3h15.5v3" /><path d="M9 2h8v4H9z" fill="#44474f" stroke="none" />
            <circle cx="12" cy="10.8" r="2.8" /><path d="M14 12.8l3 3" />
          </Line>
        </Slot>
        <Slot $width={18}><Separator /></Slot>
        <Slot>
          <svg width="20" height="20" viewBox="0 0 20 20">
            <circle cx="10" cy="10" r="10" fill="#ffb3cb" />
            <path d="M1.6 8.5Q6 6.5 10 8.8q4-2.3 8.4-.3" stroke="#45423f" fill="none" />
            <ellipse cx="5.8" cy="10.2" rx="3.4" ry="3" fill="#55544f" />
            <ellipse cx="14.2" cy="10.2" rx="3.4" ry="3" fill="#55544f" />
            <path d="M4 11l2-2M12.4 11l2-2" stroke="#a6a59d" strokeWidth="1.4" />
          </svg>
        </Slot>
        <Slot><MdMoreVert size={20} color="#3c4252" /></Slot>
      </Toolbar>
      <BookmarksBar>
        <Line w={15} h={15} sw={1.8}>
          <path d="M1.9 1.5h4v4h-4zM10.1 1.5h4v4h-4zM1.9 9.7h4v4h-4zM10.1 9.7h4v4h-4z" />
        </Line>
        <BookmarkDivider />
        {bookmarks.map((b, i) => (
          <Bookmark key={i} $width={b.width}>{b.icon}{b.label}</Bookmark>
        ))}
        <Overflow>
          <Line w={10} h={10} sw={1.6}><path d="M1 1.2L4.6 5 1 8.8M5.4 1.2L9 5 5.4 8.8" /></Line>
        </Overflow>
      </BookmarksBar>
    </BrowserBars>
  </ToolbarBack>
);

/* ---------- page ---------- */

const Viewport = styled.div`
  position: relative;
  height: 694px;
  display: flex;
  overflow: hidden;
  background: #fff;
`;

const Page = styled.div`
  width: 1585px;
  height: 694px;
  display: flex;
  flex-direction: column;
  overflow: hidden;
`;

const RepoNav = styled.nav`
  flex: none;
  height: 30px;
  background: #f4f8fb;
  border-bottom: 1px solid #d1d9e0;
  display: flex;
  align-items: flex-end;
  gap: 8px;
  padding-left: 16px;
  overflow: hidden;
`;

const RepoNavItem = styled.a`
  width: ${(p) => p.$width}px;
  height: 39px;
  flex: none;
  display: flex;
  align-items: center;
  gap: ${(p) => p.$gap}px;
  padding: 0 0 5px 8px;
  white-space: nowrap;
  border-bottom: 2px solid ${(p) => (p.$active ? "#fd8c73" : "transparent")};
  font-weight: ${(p) => (p.$active ? 700 : 400)};
`;

const Label = styled.span`
  padding-bottom: 2px;
`;

const repoNav = [
  { icon: "code", label: "Code", width: 75, gap: 8 },
  { icon: "issue", label: "Issues", width: 84, gap: 9 },
  { icon: "pull", label: "Pull requests", width: 130, gap: 10 },
  { icon: "play", label: "Actions", width: 92, gap: 8.5 },
  { icon: "table", label: "Projects", width: 97, gap: 10 },
  { icon: "book", label: "Wiki", width: 71, gap: 9 },
  { icon: "shield", label: "Security", width: 97, gap: 10 },
  { icon: "graph", label: "Insights", width: 97, gap: 10 },
  { icon: "gear", label: "Settings", width: 100, gap: 10 },
];

const Columns = styled.div`
  flex: 1;
  min-height: 0;
  display: flex;
`;

const Sidebar = styled.aside`
  width: 336px;
  flex: none;
  border-right: 1px solid #d1d9e0;
  padding-top: 21px;
`;

const SidebarHeader = styled.div`
  display: flex;
  align-items: center;
  justify-content: space-between;
  padding: 0 16px;
  margin-bottom: 9px;
`;

const SidebarTitle = styled.h2`
  margin: 0;
  font-size: 20px;
  line-height: 28px;
  font-weight: 700;
`;

const Button = styled.button`
  height: 28px;
  padding: 0 12px;
  border: 1px solid #d1d9e0;
  border-radius: 6px;
  background: #f6f8fa;
  font: 12px "Noto Sans", sans-serif;
  color: #25292e;
  display: flex;
  align-items: center;
  gap: 4px;
`;

const SidebarRule = styled.hr`
  height: 1px;
  border: 0;
  margin: 7px 8px 8px;
  background: #dde0e3;
`;

const SidebarItem = styled.a`
  position: relative;
  height: 32px;
  margin: 0 16px;
  padding: 0 8px;
  border-radius: 6px;
  display: flex;
  align-items: center;
  gap: 8px;
  font-weight: ${(p) => (p.$selected ? 700 : 400)};
  background: ${(p) => (p.$selected ? "#ecedef" : p.$hover ? "#f2f3f5" : "transparent")};
  ${(p) =>
    p.$selected &&
    css`
      &::before {
        content: "";
        position: absolute;
        left: -8px;
        top: 4px;
        width: 4px;
        height: 24px;
        border-radius: 6px;
        background: #0366e0;
      }
    `}
`;

const SidebarLabel = styled(Label)`
  flex: 1;
`;

const SidebarHeading = styled.h3`
  margin: 0 24px;
  height: 32px;
  line-height: 32px;
  font-size: 12px;
  font-weight: 700;
  color: #59636e;
`;

const workflows = [
  ".github/workflows/static.yml",
  "Build Verification",
  "Deploy Blog",
  "Deploy to GitHub Pages",
  "Deploy to GitHub Pages",
  "Quality Gates",
  "Quality Gates and Validation",
];

const management = [
  ["cache", "Caches", false],
  ["rocket", "Deployments", true],
  ["verified", "Attestations", true],
  ["server", "Runners", false],
  ["meter", "Usage metrics", true],
  ["meter", "Performance metrics", true],
];

const Main = styled.main`
  flex: 1;
  min-width: 0;
  padding: 16px 24px 0;
  overflow: hidden;
`;

const MainHeader = styled.div`
  height: 77px;
  display: flex;
  align-items: flex-start;
  gap: 8px;
`;

const Heading = styled.div`
  flex: 1;
  padding-top: 3px;
`;

const Title = styled.h1`
  margin: 0;
  font-size: 20px;
  line-height: 30px;
  font-weight: 400;
  letter-spacing: -0.12px;
`;

const FileLink = styled.a`
  display: block;
  line-height: 20px;
  color: #0969da;
`;

const SearchField = styled.div`
  width: 300px;
  height: 32px;
  border: 1px solid #d1d9e0;
  border-radius: 6px;
  padding-left: 7px;
  display: flex;
  align-items: center;
  gap: 9px;
  color: #59636e;
`;

const MenuButton = styled.span`
  width: 32px;
  height: 32px;
  border: 1px solid #d1d9e0;
  border-radius: 6px;
  background: #f6f8fa;
  display: flex;
  align-items: center;
  justify-content: center;
`;

const RunTable = styled.section`
  border: 1px solid #d1d9e0;
  border-radius: 6px 6px 0 0;
  overflow: hidden;
`;

const RunTableHeader = styled.div`
  height: 64px;
  background: #f4f7fb;
  display: flex;
  align-items: center;
  gap: 22px;
  padding: 0 25px 0 16px;
`;

const RunCount = styled.strong`
  flex: 1;
`;

const Filter = styled.span`
  display: flex;
  align-items: center;
  gap: 4px;
  color: #59636e;
`;

const DispatchBanner = styled.div`
  height: 67px;
  border: solid #80d4ff;
  border-width: 1px 0;
  background: #d8f4ff;
  display: flex;
  align-items: center;
  justify-content: space-between;
  padding: 0 16px 3px;
`;

const CaretSlot = styled.span`
  margin: 0 -4px 0 -1px;
`;

const Code = styled.code`
  padding: 0 4px;
  font: 12px "Liberation Mono", monospace;
  letter-spacing: -0.2px;
`;

const RunRow = styled.div`
  height: 78px;
  border-bottom: 1px solid #dce2e7;
  display: grid;
  grid-template-columns: 24px 576px 1fr 174px 17px;
  align-items: start;
  padding: 0 19px 0 16px;
`;

const StatusCell = styled.span`
  padding-top: 22px;
`;

const RunInfo = styled.div`
  padding-top: 16px;
`;

const RunTitle = styled.div`
  font-size: 16px;
  line-height: 24px;
  font-weight: 700;
  letter-spacing: 0.02px;
`;

const RunMeta = styled.div`
  margin-top: 4px;
  font-size: 12px;
  line-height: 18px;
  color: #59636e;
`;

const MetaLink = styled.span`
  text-decoration: underline;
  text-decoration-thickness: 1px;
  text-underline-offset: 3px;
  text-decoration-skip-ink: none;
`;

const BranchLabel = styled.span`
  justify-self: start;
  margin-top: 30px;
  padding: 0 6px;
  height: 18px;
  border-radius: 6px;
  background: #d8f4ff;
  color: #0969da;
  font: 12px/19px "Liberation Mono", monospace;
  letter-spacing: -0.2px;
`;

const RunTimes = styled.div`
  padding-top: ${(p) => (p.$cancelled ? 22 : 21)}px;
  display: flex;
  flex-direction: column;
  gap: ${(p) => (p.$cancelled ? 2 : 3)}px;
  font-size: 12px;
  line-height: 18px;
  color: #59636e;
`;

const RunTime = styled.span`
  height: 18px;
  display: flex;
  align-items: center;
  gap: 3.5px;
  font-style: ${(p) => (p.$cancelled ? "italic" : "normal")};
`;

const RunMenu = styled.span`
  padding-top: 31px;
`;

const runs = [
  { ok: false, title: "fix: Update bundle baseline and remove broken workflow", n: 18, sha: "4352484", when: "2 minutes ago", took: "1s" },
  { ok: false, title: "fix: Add .nojekyll to fix GitHub Pages asset loading", n: 17, sha: "44b6752", when: "Today at 9:51 PM", took: "1s" },
  { ok: true, title: "fix: Fix bundle baseline schema and CSS linting", n: 16, sha: "a7aceea", when: "Today at 9:49 PM", took: "1m 29s" },
  { ok: true, title: "fix: Improve text rendering quality and add avatar image", n: 15, sha: "c744c66", when: "Today at 9:38 PM", took: "1m 27s" },
  { ok: false, title: "fix: Update personal information and fix contact functionality", n: 14, sha: "1cbd64e", when: "Today at 9:31 PM", took: "Cancelled" },
  { ok: true, title: "fix: Critical Edge Runtime and bundle check fixes", n: 13, sha: "cf188ff", when: "Today at 9:20 PM", took: "2m 15s" },
];

const Scrollbar = styled.div`
  width: 15px;
  background: #fcfcfc;
  display: flex;
  flex-direction: column;
  align-items: center;
  padding: 6px 0 7px;
`;

const ScrollThumb = styled.span`
  width: 9px;
  height: 253px;
  margin: 33px 0 auto;
  border-radius: 5px;
  background: #8b8b8b;
`;

const StatusBubble = styled.div`
  position: absolute;
  left: 0;
  bottom: 0;
  width: 532px;
  height: 24px;
  padding-left: 5px;
  border-top: 1px solid #d3d8e6;
  border-radius: 0 4px 0 0;
  background: #d8e1fb;
  color: #44474f;
  font-size: 13px;
  line-height: 23px;
`;

const GitHubPage = () => (
  <Page>
    <RepoNav>
      {repoNav.map(({ icon, label, width, gap }) => (
        <RepoNavItem key={label} $width={width} $gap={gap} $active={label === "Actions"}>
          <Octicon name={icon} />
          <Label>{label}</Label>
        </RepoNavItem>
      ))}
    </RepoNav>
    <Columns>
      <Sidebar>
        <SidebarHeader>
          <SidebarTitle>Actions</SidebarTitle>
          <Button><Label>New workflow</Label></Button>
        </SidebarHeader>
        <SidebarItem><SidebarLabel>All workflows</SidebarLabel></SidebarItem>
        <SidebarRule />
        {workflows.map((w, i) => (
          <SidebarItem key={i} $selected={i === 4}><SidebarLabel>{w}</SidebarLabel></SidebarItem>
        ))}
        <SidebarRule />
        <SidebarHeading>Management</SidebarHeading>
        {management.map(([icon, label, external], i) => (
          <SidebarItem key={label} $hover={i === 5}>
            <Octicon name={icon} />
            <SidebarLabel>{label}</SidebarLabel>
            {external && <Octicon name="arrow" />}
          </SidebarItem>
        ))}
      </Sidebar>
      <Main>
        <MainHeader>
          <Heading>
            <Title>Deploy to GitHub Pages</Title>
            <FileLink>deploy-pages.yml</FileLink>
          </Heading>
          <SearchField>
            <Octicon name="search" />
            <Label>Filter workflow runs</Label>
          </SearchField>
          <MenuButton><Octicon name="kebab" /></MenuButton>
        </MainHeader>
        <RunTable>
          <RunTableHeader>
            <RunCount>18 workflow runs</RunCount>
            {["Event", "Status", "Branch", "Actor"].map((f) => (
              <Filter key={f}><Label>{f}</Label><Octicon name="caret" /></Filter>
            ))}
          </RunTableHeader>
          <DispatchBanner>
            <Label>This workflow has a <Code>workflow_dispatch</Code> event trigger.</Label>
            <Button><Label>Run workflow</Label><CaretSlot><Octicon name="caret" color="#25292e" /></CaretSlot></Button>
          </DispatchBanner>
          {runs.map((r) => (
            <RunRow key={r.n}>
              <StatusCell>
                <Octicon name={r.ok ? "check" : "stop"} color={r.ok ? "#07873a" : "#59636e"} />
              </StatusCell>
              <RunInfo>
                <RunTitle>{r.title}</RunTitle>
                <RunMeta>
                  <b>Deploy to GitHub Pages</b> #{r.n}: Commit <MetaLink>{r.sha}</MetaLink> pushed by <MetaLink>Senpai-Sama7</MetaLink>
                </RunMeta>
              </RunInfo>
              <BranchLabel>main</BranchLabel>
              <RunTimes $cancelled={r.took === "Cancelled"}>
                <RunTime><Octicon name="calendar" />{r.when}</RunTime>
                <RunTime $cancelled={r.took === "Cancelled"}><Octicon name="stopwatch" />{r.took}</RunTime>
              </RunTimes>
              <RunMenu><Octicon name="kebab" /></RunMenu>
            </RunRow>
          ))}
        </RunTable>
      </Main>
    </Columns>
  </Page>
);

/* ---------- dock ---------- */

const Dock = styled.footer`
  position: relative;
  height: 56px;
  display: flex;
  align-items: stretch;
  padding-left: 4px;
  overflow: hidden;
  background:
    radial-gradient(ellipse 110px 24px at 930px 8px, rgba(96, 66, 36, 0.35), transparent),
    radial-gradient(ellipse 260px 40px at 860px 0, rgba(70, 50, 34, 0.35), transparent),
    linear-gradient(90deg, #1b181d 0, #1c191d 400px, #211c1e 700px, #261f1f 900px, #201d20 1150px, #201e20 1500px, #1d1b1f 100%);
`;

const Wallpaper = styled.svg`
  position: absolute;
  inset: 0;
`;

const DockItem = styled.div`
  width: 50px;
  margin: 3px 2px;
  border-radius: 10px;
  padding-top: ${(p) => p.$top}px;
  display: flex;
  flex-direction: column;
  align-items: center;
  position: relative;
  background: ${(p) => (p.$active ? "rgba(255,255,255,.16)" : "transparent")};
`;

const Dots = styled.span`
  position: absolute;
  bottom: 0;
  display: flex;
  gap: 3px;
`;

const Dot = styled.i`
  width: 4px;
  height: 4px;
  border-radius: 2px;
  background: #3d86e8;
`;

const DockDivider = styled.span`
  width: 1px;
  margin: 9px 14px 9px 1px;
  background: #4b494d;
`;

const DockTrash = styled.span`
  position: relative;
  padding-top: 9px;
`;

const AppsGrid = styled.span`
  position: relative;
  margin: 15px 18px auto auto;
`;

const FinderIcon = () => (
  <svg width="34" height="34" viewBox="0 0 34 34">
    <defs>
      <linearGradient id="fl" x1="0" y1="0" x2="0" y2="1"><stop stopColor="#1cc4fb" /><stop offset="1" stopColor="#1a62e6" /></linearGradient>
      <linearGradient id="fr" x1="0" y1="0" x2="0" y2="1"><stop stopColor="#f4f7fa" /><stop offset="1" stopColor="#c9d6e6" /></linearGradient>
      <clipPath id="fc"><rect width="34" height="34" rx="7.5" /></clipPath>
    </defs>
    <g clipPath="url(#fc)">
      <rect width="34" height="34" fill="url(#fr)" />
      <path d="M0 0h18.5c-2.5 5-4.5 11-5 19.5h5.2c-.2 5 .2 10 1.6 14.5H0z" fill="url(#fl)" />
    </g>
    <path d="M9.5 11v2.5M24.5 11v2.5" stroke="#14202e" strokeWidth="1.6" strokeLinecap="round" />
    <path d="M8 22.5c5 4.6 13 4.6 18 0" stroke="#14202e" strokeWidth="1.4" fill="none" strokeLinecap="round" />
  </svg>
);

const WriterIcon = () => (
  <svg width="34" height="34" viewBox="0 0 34 34">
    <defs><linearGradient id="wr" x1="0" y1="0" x2="0" y2="1"><stop stopColor="#22d3f5" /><stop offset="1" stopColor="#0b6fb8" /></linearGradient></defs>
    <rect width="34" height="34" rx="8" fill="url(#wr)" />
    <path d="M2 7a5.5 5.5 0 0 1 5.5-5.5H20L32 14v12.5a5.5 5.5 0 0 1-5.5 5.5h-19A5.5 5.5 0 0 1 2 26.5z" fill="#fff" />
    <path d="M20 1.5L32 14c-2-2.5-5-4-8.5-3.5C23 7 22 4 20 1.5z" fill="#d5dade" />
    <path d="M7.5 9h7M7.5 12h7M7.5 15h7M7.5 18.5h20M7.5 22h20M7.5 25.5h14" stroke="#1673ac" strokeWidth="2" />
    <rect x="16.5" y="8.5" width="10.5" height="8" fill="#3d8ec2" />
    <path d="M16.5 16.5l3.5-5 2.5 3 2-2 2.5 4z" fill="#263238" />
  </svg>
);

const EditorIcon = () => (
  <svg width="34" height="36" viewBox="0 -2 34 36">
    <rect width="34" height="34" rx="7.5" fill="#f0f0f0" />
    <path d="M5 7h15M5 12h18M5 15.5h14M5 19h16M5 23h12M5 27h9" stroke="#d8d8d8" />
    <path d="M27.5-.6l3 1.2L18.5 28.5 14.5 34l.8-6.5z" fill="#8fa1b1" />
    <path d="M29.5-.2L16 31" stroke="#49525b" />
    <path d="M28-.4L15.6 28" stroke="#dfe6ec" />
  </svg>
);

const ChromiumIcon = () => (
  <svg width="38" height="38" viewBox="-19 -19 38 38">
    <circle r="19" fill="#fcbc05" />
    <path d="M-16.9-8.7A19 19 0 0 1 17-9H0A9.5 9.5 0 0 0-8.3 4.6z" fill="#f59a00" />
    <path d="M17-9A19 19 0 0 1 1 19L8.5 4.7A9.5 9.5 0 0 0 3-9z" fill="#ffd867" />
    <circle r="9.5" fill="#fff" />
    <circle r="7.8" fill="#fdbb07" />
  </svg>
);

const TerminalIcon = () => (
  <svg width="34" height="34" viewBox="0 0 34 34">
    <rect x=".7" y=".7" width="32.6" height="32.6" rx="7.5" fill="#050505" stroke="#9fb0b8" strokeWidth="1.3" />
    <rect x="3.5" y="3.5" width="27" height="27" rx="4.5" fill="#272727" />
    <path d="M7 7.5l3.6 2L7 11.5M12.5 13.6h5" stroke="#fff" strokeWidth="1.5" fill="none" />
  </svg>
);

const TrashIcon = () => (
  <svg width="28" height="36" viewBox="0 0 28 36">
    <defs><linearGradient id="tr"><stop stopColor="#5b5c5a" /><stop offset=".35" stopColor="#3b3b3b" /><stop offset=".7" stopColor="#515250" /><stop offset="1" stopColor="#6a6b69" /></linearGradient></defs>
    <path d="M1.5 6h25L24 33.5q-10 3-20 0z" fill="url(#tr)" />
    <path d="M3 14l8 6-6 8M24 12l-9 9 7 9" stroke="#6c716a" fill="none" opacity=".6" />
    <path d="M1 5l4-3 3 2 4-3.5L16 3l4-2 3 2.5 4 2.5-4 2H5z" fill="#d9d9d9" />
    <path d="M8 4l3 2-3 1zM16 3l3 3-4 1zM22 5l2 1-3 1.5z" fill="#3a3f4a" />
    <path d="M11 5h3v1.5h-3z" fill="#3aa0a8" /><path d="M19 3h2v2h-2z" fill="#c9623a" />
    <ellipse cx="14" cy="6.5" rx="12.7" ry="3" fill="none" stroke="#8d8d8b" strokeWidth=".8" />
  </svg>
);

const dockApps = [
  { icon: <FinderIcon />, top: 8, dots: 1 },
  { icon: <WriterIcon />, top: 8, dots: 0 },
  { icon: <EditorIcon />, top: 6, dots: 1 },
  { icon: <ChromiumIcon />, top: 6, dots: 1, active: true },
  { icon: <TerminalIcon />, top: 8, dots: 2 },
];

const AppDock = () => (
  <Dock>
    <Wallpaper width="1600" height="56">
      <defs>
        <filter id="clouds" x="0" y="0" width="100%" height="100%">
          <feTurbulence type="fractalNoise" baseFrequency="0.009 0.07" numOctaves="4" seed="7" />
          <feColorMatrix values="0 0 0 0 .34  0 0 0 0 .3  0 0 0 0 .26  1.8 0 0 0 -.78" />
        </filter>
        <linearGradient id="cloudFade">
          <stop offset="0" stopColor="#fff" stopOpacity=".12" />
          <stop offset=".6" stopColor="#fff" stopOpacity=".2" />
          <stop offset=".8" stopColor="#fff" stopOpacity=".6" />
          <stop offset="1" stopColor="#fff" stopOpacity=".4" />
        </linearGradient>
        <mask id="cloudMask"><rect width="1600" height="56" fill="url(#cloudFade)" /></mask>
      </defs>
      <g mask="url(#cloudMask)">
        <rect width="1600" height="56" filter="url(#clouds)" />
      </g>
    </Wallpaper>
    {dockApps.map((a, i) => (
      <DockItem key={i} $top={a.top} $active={a.active}>
        {a.icon}
        <Dots>{Array.from({ length: a.dots }, (_, d) => <Dot key={d} />)}</Dots>
      </DockItem>
    ))}
    <DockDivider />
    <DockTrash><TrashIcon /></DockTrash>
    <AppsGrid>
      <svg width="25" height="25" viewBox="0 0 25 25" fill="#fff">
        {[3, 12.5, 22].map((y) => [3, 12.5, 22].map((x) => <circle key={`${x}-${y}`} cx={x} cy={y} r="2.5" />))}
      </svg>
    </AppsGrid>
  </Dock>
);

export default function App() {
  return (
    <Desktop>
      <GlobalStyle />
      <SystemBar />
      <Tabs />
      <BrowserToolbar />
      <Viewport>
        <GitHubPage />
        <Scrollbar>
          <svg width="9" height="5" viewBox="0 0 9 5" fill="#7d7d7d"><path d="M0 5L4.5 0 9 5z" /></svg>
          <ScrollThumb />
          <svg width="9" height="5" viewBox="0 0 9 5" fill="#7d7d7d"><path d="M0 0h9L4.5 5z" /></svg>
        </Scrollbar>
        <StatusBubble>https://github.com/Senpai-Sama7/DouglasMitchell.info/actions/metrics/performance</StatusBubble>
      </Viewport>
      <AppDock />
    </Desktop>
  );
}
